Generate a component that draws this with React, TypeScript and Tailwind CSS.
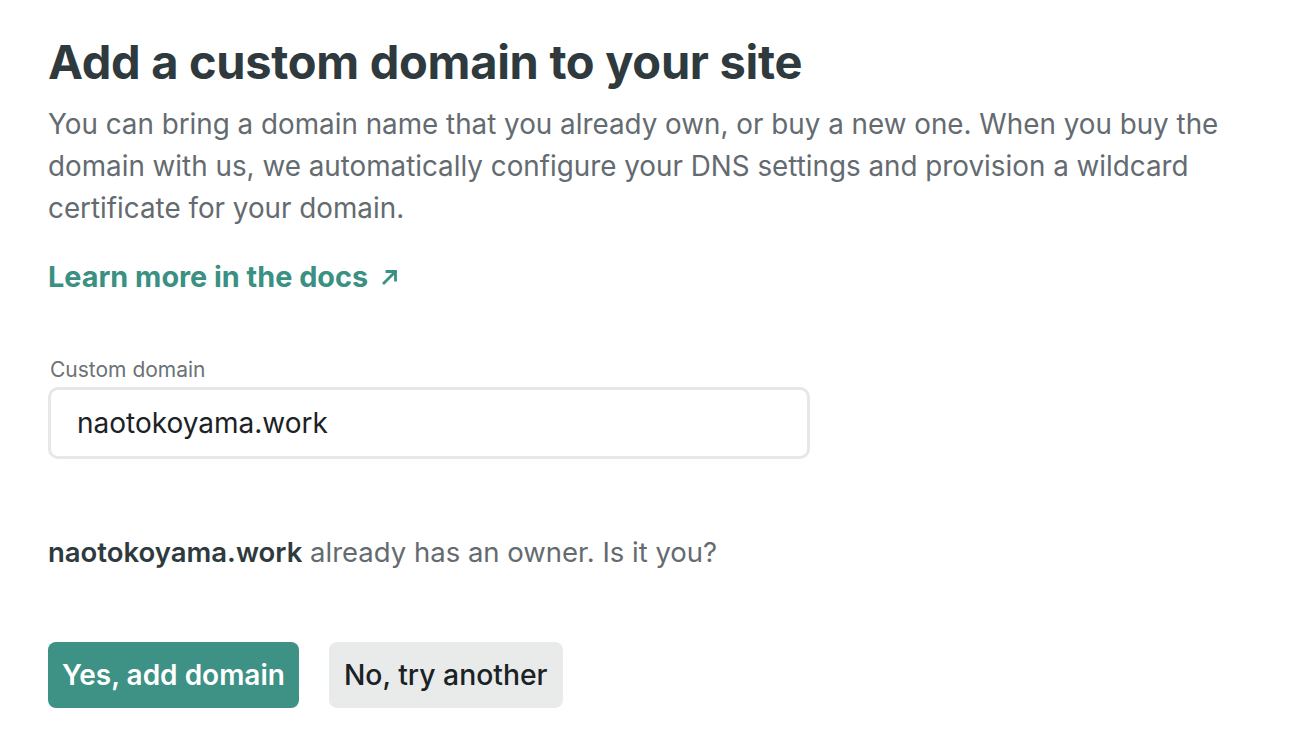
import React from "react";

export default function App() {
  return (
    <div className="min-h-screen w-[1308px] h-[756px] overflow-hidden bg-white" style={{ fontFamily: "Inter, 'Noto Sans', sans-serif" }}>
      <div className="pl-[48px] pt-[30px]">
        <h1 className="text-[47px] font-bold leading-[64px] text-[#2e3a3e] tracking-[-0.3px]">Add a custom domain to your site</h1>
        <p className="mt-[9px] text-[27.8px] leading-[42px] text-[#646b70] w-[1200px]">
          You can bring a domain name that you already own, or buy a new one. When you buy the domain with us, we automatically configure your DNS settings and provision a wildcard certificate for your domain.
        </p>
        <a className="mt-[27px] inline-flex items-center gap-[13px] text-[28.8px] font-bold leading-[42px] text-[#3a9083]">
          Learn more in the docs
          <svg width="18" height="18" viewBox="0 0 18 18" fill="none" stroke="currentColor" strokeWidth="2.8" strokeLinecap="square">
            <path d="M3 15 L14 4" />
            <path d="M6 3.5 H14.5 V12" />
          </svg>
        </a>
        <div className="mt-[60px] text-[21px] leading-[24px] text-[#6b7276] pl-[2px]">Custom domain</div>
        <div className="mt-[5px] w-[762px] h-[72px] rounded-[10px] border-[3px] border-[#e6e8e8] flex items-center pl-[26px] text-[28px] text-[#1b2226]">
          naotokoyama.work
        </div>
        <p className="mt-[72px] text-[27.5px] leading-[42px] text-[#646b70]">
          <span className="font-semibold text-[#2e3a3e]">naotokoyama.work</span> already has an owner. Is it you?
        </p>
        <div className="mt-[69px] flex gap-[30px]">
          <button className="h-[66px] px-[14px] rounded-[8px] bg-[#3d9185] text-white text-[28px] font-semibold">Yes, add domain</button>
          <button className="h-[66px] px-[15px] rounded-[8px] bg-[#e9ebeb] text-[#1b2226] text-[28.3px] font-medium">No, try another</button>
        </div>
      </div>
    </div>
  );
}
